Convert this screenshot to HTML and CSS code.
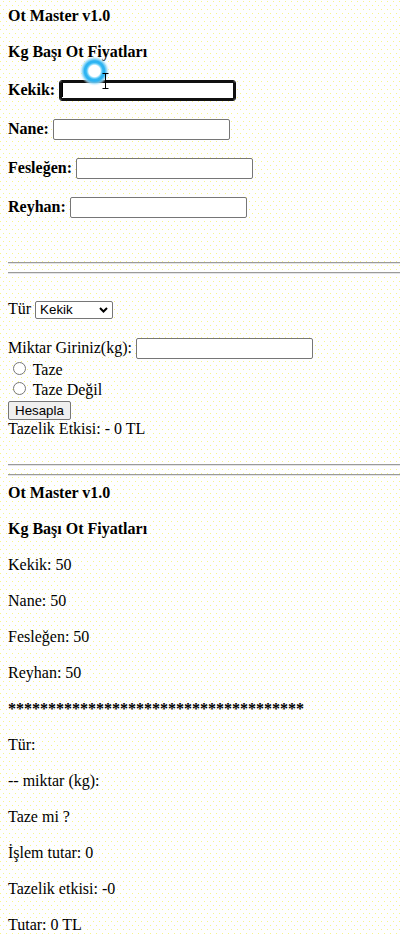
FILE: index.html
```html
<!DOCTYPE html>
<html lang="tr">
<head>
<meta charset="utf-8">
<title>Ot Master v1.0</title>
<link rel="stylesheet" href="styles.css">
</head>
<body>
<div class="page">
  <section class="prices">
    <p class="head">Ot Master v1.0</p>
    <p class="head">Kg Başı Ot Fiyatları</p>
    <p class="field"><b>Kekik:</b> <span class="focus-wrap"><input type="text" class="txt focused" aria-label="Kekik"><span class="caret"></span></span></p>
    <p class="field"><b>Nane:</b> <input type="text" class="txt" aria-label="Nane"></p>
    <p class="field"><b>Fesleğen:</b> <input type="text" class="txt" aria-label="Fesleğen"></p>
    <p class="field field-last"><b>Reyhan:</b> <input type="text" class="txt" aria-label="Reyhan"></p>
  </section>
  <hr class="rule">
  <hr class="rule">
  <section class="calc">
    <p class="calc-type">Tür <span class="select"><span class="select-text">Kekik</span><svg class="chev" width="9" height="6" viewBox="0 0 9 6"><path d="M1 1 L4.5 4.5 L8 1" fill="none" stroke="#000" stroke-width="2"/></svg></span></p>
    <p class="calc-amount">Miktar Giriniz(kg): <input type="text" class="txt" aria-label="Miktar"></p>
    <div class="opts">
      <label class="opt"><input type="radio" name="taze" class="radio"> Taze</label>
      <label class="opt"><input type="radio" name="taze" class="radio"> Taze Değil</label>
    </div>
    <div class="act"><button type="button" class="btn">Hesapla</button></div>
    <p class="note">Tazelik Etkisi: - 0 TL</p>
  </section>
  <hr class="rule">
  <hr class="rule rule-tight">
  <section class="result">
    <p class="head">Ot Master v1.0</p>
    <p class="head">Kg Başı Ot Fiyatları</p>
    <p class="res">Kekik: 50</p>
    <p class="res">Nane: 50</p>
    <p class="res">Fesleğen: 50</p>
    <p class="res">Reyhan: 50</p>
    <p class="res stars">*************************************</p>
    <p class="res">Tür:</p>
    <p class="res">-- miktar (kg):</p>
    <p class="res">Taze mi ?</p>
    <p class="res">İşlem tutar: 0</p>
    <p class="res">Tazelik etkisi: -0</p>
    <p class="res">Tutar: 0 TL</p>
  </section>
  <svg class="pointer" width="44" height="44" viewBox="0 0 44 44" aria-hidden="true">
    <defs>
      <radialGradient id="glow" cx="16.5" cy="16" r="15" gradientUnits="userSpaceOnUse">
        <stop offset="0" stop-color="#ffffff"/>
        <stop offset="0.38" stop-color="#ffffff"/>
        <stop offset="0.46" stop-color="#8fdcfb"/>
        <stop offset="0.56" stop-color="#30b6f3"/>
        <stop offset="0.68" stop-color="#2cb2f1"/>
        <stop offset="0.82" stop-color="#8ed7f8" stop-opacity="0.85"/>
        <stop offset="1" stop-color="#e6f7ff" stop-opacity="0"/>
      </radialGradient>
    </defs>
    <circle cx="16.5" cy="16" r="15" fill="url(#glow)"/>
    <path d="M24.5 18.5 H30.5 M27.5 18.5 V33.5 M24.5 33.5 H30.5" fill="none" stroke="#000" stroke-width="1"/>
  </svg>
</div>
</body>
</html>
```

FILE: styles.css
```css
html, body {
  margin: 0;
  padding: 0;
  background: #ffffff;
}

body {
  font-family: "Liberation Serif", "Times New Roman", serif;
  font-size: 16px;
  color: #000000;
}

.page {
  position: relative;
  box-sizing: border-box;
  width: 400px;
  height: 934px;
  overflow: hidden;
  padding: 6px 0 0 8px;
  background-color: #fefeff;
  background-image:
    conic-gradient(from 270deg at 1px 1px, #f7f58a 0 90deg, transparent 90deg),
    conic-gradient(from 270deg at 1px 1px, #f7f58a 0 90deg, transparent 90deg);
  background-size: 6px 8px;
  background-position: 3px 1px, 0 5px;
}

.prices, .calc, .result {
  display: block;
}

.head {
  margin: 0 0 16px;
  line-height: 20px;
  font-weight: bold;
}

.field {
  margin: 18px 0;
  line-height: 20px;
}

.field-last {
  margin-bottom: 44px;
}

.txt {
  box-sizing: border-box;
  width: 177px;
  height: 21px;
  margin: 0;
  padding: 1px 2px;
  border: 1px solid #767676;
  border-radius: 2px;
  background: #ffffff;
  font-family: "Liberation Sans", Arial, sans-serif;
  font-size: 13.333px;
  vertical-align: baseline;
}

.focus-wrap {
  position: relative;
  display: inline-block;
}

.txt.focused {
  border-color: #101010;
  border-radius: 3px;
  box-shadow: inset 0 0 0 2px #101010;
  outline: none;
}

.caret {
  position: absolute;
  left: 3px;
  top: 3px;
  width: 1px;
  height: 14px;
  background: #000000;
}

.rule {
  display: block;
  height: 0;
  margin: 8px 0;
  border: 0;
  border-top: 1px solid #9a9a9a;
  border-bottom: 1px solid #e4e4e4;
}

.rule-tight {
  margin-bottom: 7px;
}

.calc-type {
  margin: 25px 0 19px;
  line-height: 20px;
}

.select {
  display: inline-flex;
  align-items: center;
  box-sizing: border-box;
  width: 78px;
  height: 18px;
  padding: 0 4px 0 4px;
  border: 1px solid #767676;
  border-radius: 2px;
  background: #ffffff;
  font-family: "Liberation Sans", Arial, sans-serif;
  font-size: 13.333px;
  line-height: 15px;
  vertical-align: baseline;
}

.select-text {
  flex: 1;
}

.chev {
  display: block;
  flex: none;
}

.calc-amount {
  margin: 0;
  line-height: 20px;
}

.opts {
  display: flex;
  flex-direction: column;
  line-height: normal;
}

.opt {
  display: block;
}

.radio {
  width: 13px;
  height: 13px;
  margin: 3px 3px 0 5px;
  vertical-align: baseline;
}

.act {
  margin-top: 2px;
  line-height: normal;
}

.btn {
  margin: 0;
  padding: 1px 6px;
  border: 1px solid #767676;
  border-radius: 2px;
  background: #efefef;
  color: #000000;
  font-family: "Liberation Sans", Arial, sans-serif;
  font-size: 13.333px;
}

.note {
  margin: 0 0 26px;
  line-height: normal;
}

.res {
  margin: 0 0 16px;
  line-height: 20px;
}

.res:last-child {
  margin-bottom: 0;
}

.stars {
  font-weight: bold;
  white-space: nowrap;
}

.pointer {
  position: absolute;
  left: 78px;
  top: 55px;
}
```
